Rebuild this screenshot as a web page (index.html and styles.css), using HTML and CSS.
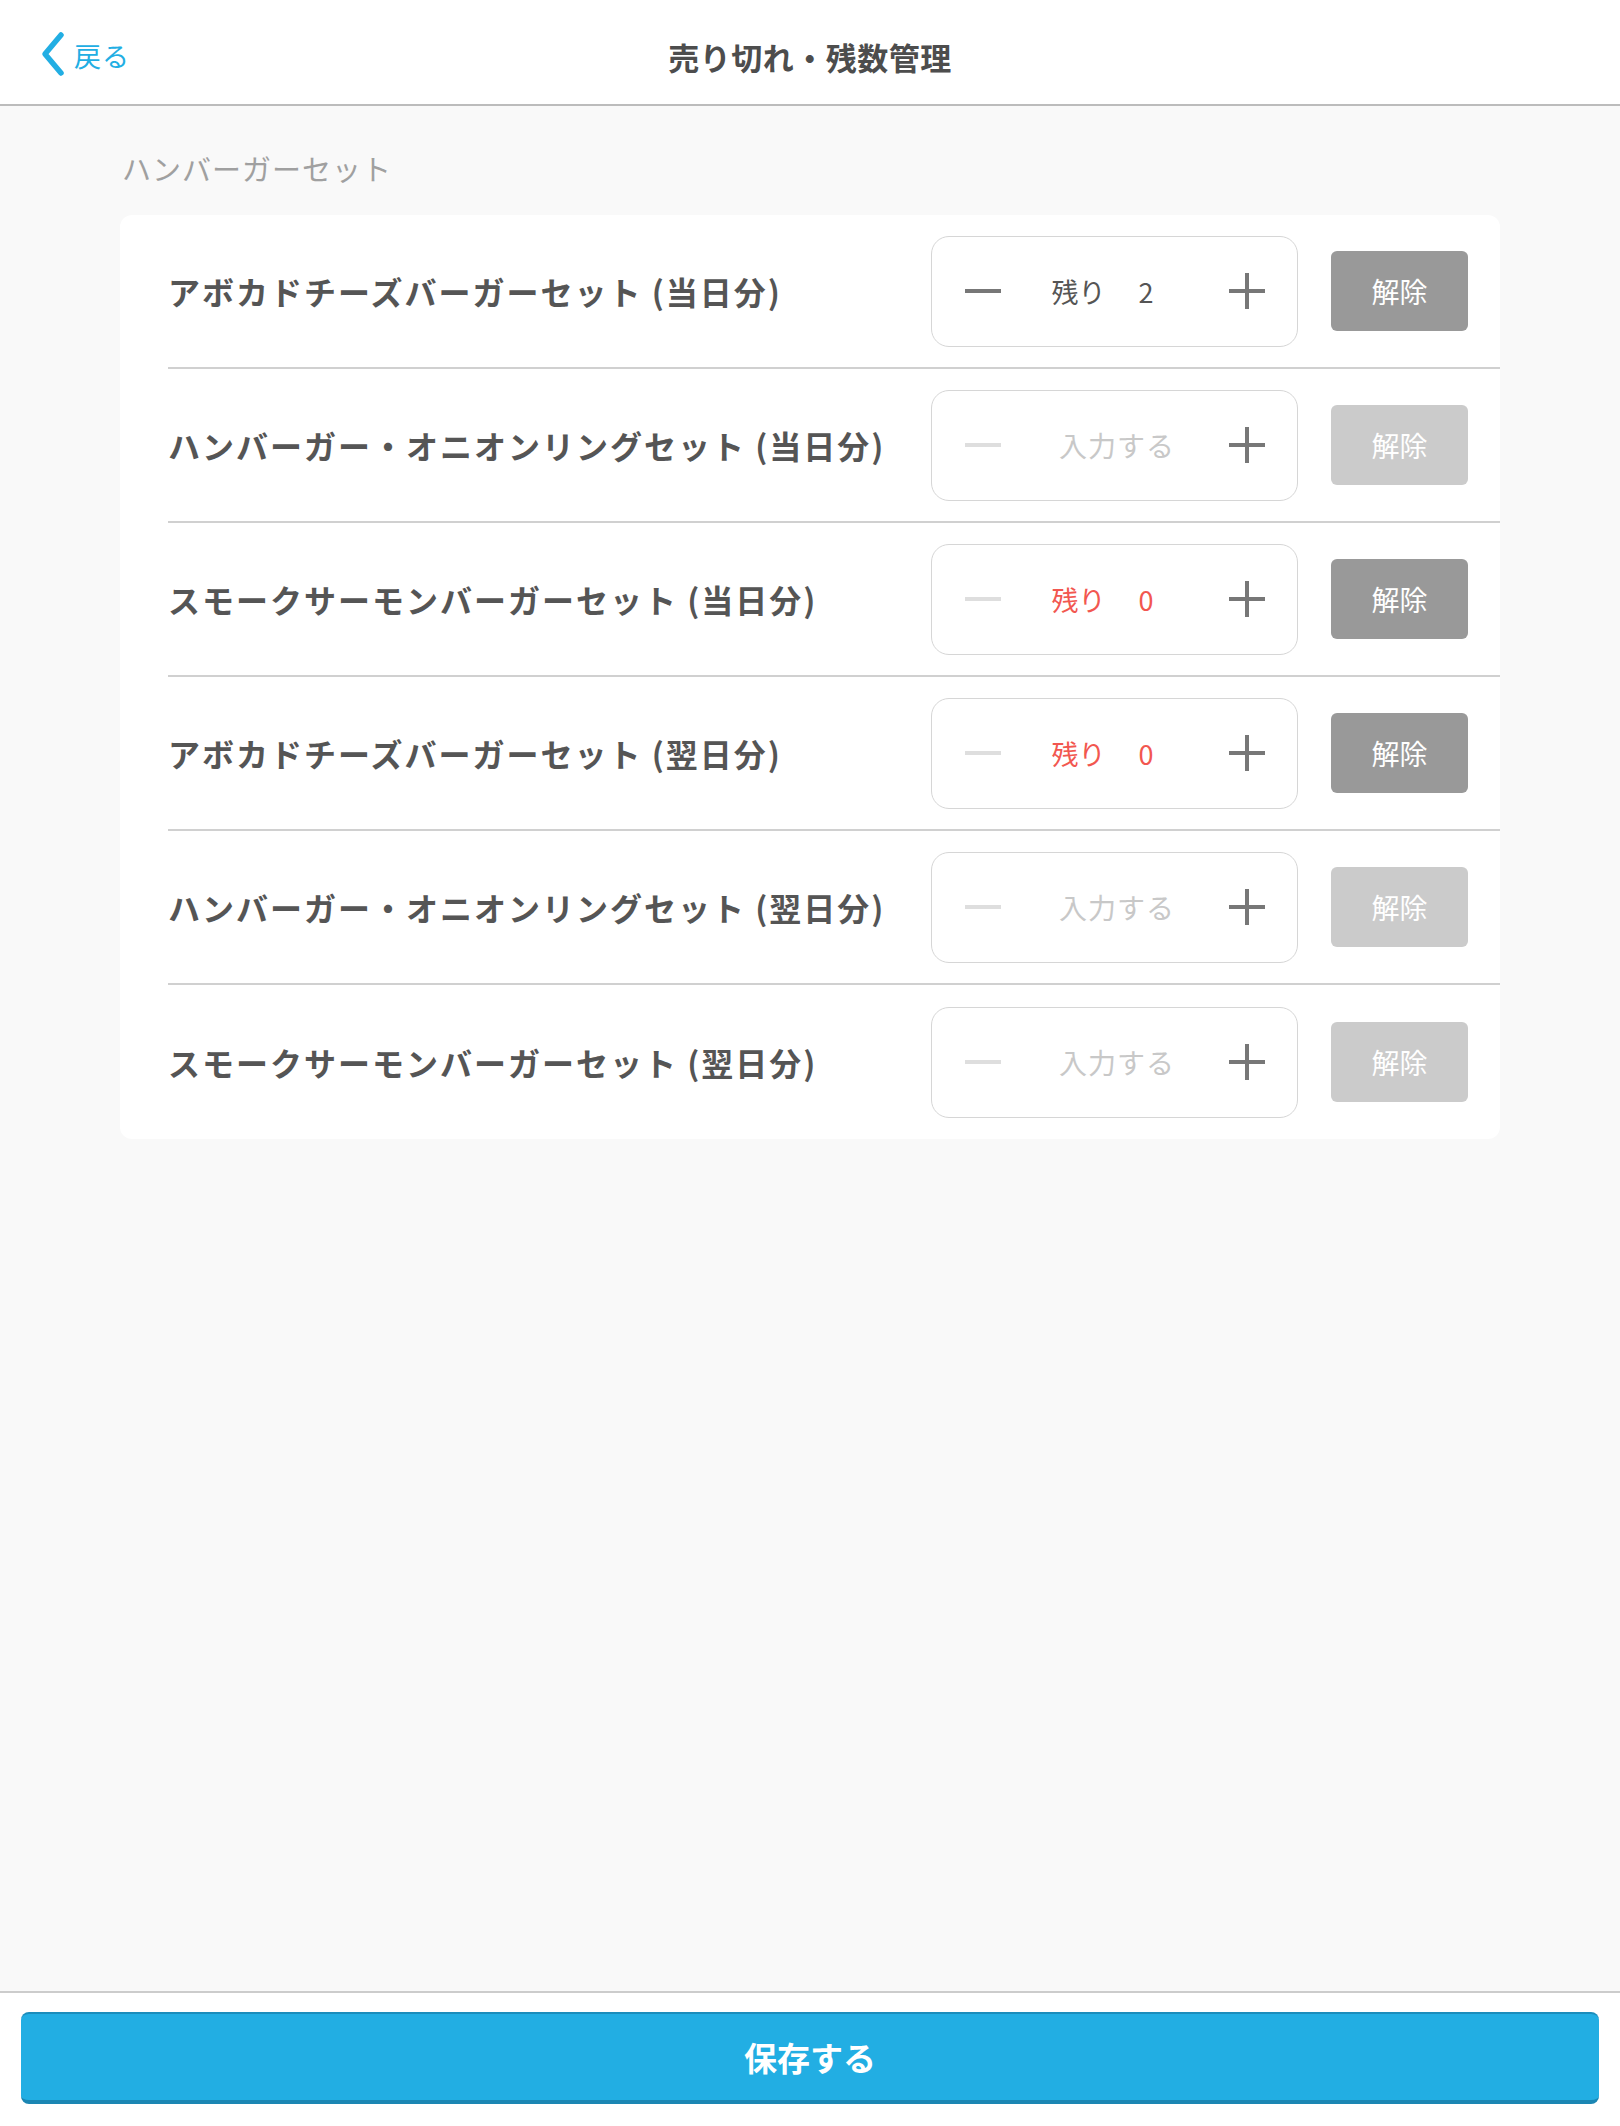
FILE: index.html
```html
<!DOCTYPE html>
<html lang="ja">
<head>
    <meta charset="UTF-8">
    <meta name="viewport" content="width=device-width, initial-scale=1.0">
    <title>売り切れ・残数管理</title>
    <link rel="stylesheet" href="styles.css">
</head>
<body>
    <header class="header">
        <a class="back" href="#">
            <svg class="back-icon" width="26" height="46" viewBox="0 0 26 46">
                <path d="M21 4 L5 23 L21 42" fill="none" stroke="#22aee3" stroke-width="5.5" stroke-linecap="round" stroke-linejoin="round"/>
            </svg>
            <span>戻る</span>
        </a>
        <h1 class="title">売り切れ・残数管理</h1>
        <div></div>
    </header>

    <main class="main">
        <p class="group-label">ハンバーガーセット</p>
        <div class="card">
            <div class="row">
                <div class="name">アボカドチーズバーガーセット (当日分)</div>
                <div class="stepper">
                    <svg class="minus" width="36" height="36" viewBox="0 0 36 36"><rect x="0" y="16" width="36" height="4"/></svg>
                    <div class="value"><span>残り</span><span class="num">2</span></div>
                    <svg class="plus" width="36" height="36" viewBox="0 0 36 36"><rect x="0" y="16" width="36" height="4"/><rect x="16" y="0" width="4" height="36"/></svg>
                </div>
                <button class="clear">解除</button>
            </div>
            <div class="row">
                <div class="name">ハンバーガー・オニオンリングセット (当日分)</div>
                <div class="stepper">
                    <svg class="minus off" width="36" height="36" viewBox="0 0 36 36"><rect x="0" y="16" width="36" height="4"/></svg>
                    <div class="value empty">入力する</div>
                    <svg class="plus" width="36" height="36" viewBox="0 0 36 36"><rect x="0" y="16" width="36" height="4"/><rect x="16" y="0" width="4" height="36"/></svg>
                </div>
                <button class="clear off">解除</button>
            </div>
            <div class="row">
                <div class="name">スモークサーモンバーガーセット (当日分)</div>
                <div class="stepper">
                    <svg class="minus off" width="36" height="36" viewBox="0 0 36 36"><rect x="0" y="16" width="36" height="4"/></svg>
                    <div class="value sold"><span>残り</span><span class="num">0</span></div>
                    <svg class="plus" width="36" height="36" viewBox="0 0 36 36"><rect x="0" y="16" width="36" height="4"/><rect x="16" y="0" width="4" height="36"/></svg>
                </div>
                <button class="clear">解除</button>
            </div>
            <div class="row">
                <div class="name">アボカドチーズバーガーセット (翌日分)</div>
                <div class="stepper">
                    <svg class="minus off" width="36" height="36" viewBox="0 0 36 36"><rect x="0" y="16" width="36" height="4"/></svg>
                    <div class="value sold"><span>残り</span><span class="num">0</span></div>
                    <svg class="plus" width="36" height="36" viewBox="0 0 36 36"><rect x="0" y="16" width="36" height="4"/><rect x="16" y="0" width="4" height="36"/></svg>
                </div>
                <button class="clear">解除</button>
            </div>
            <div class="row">
                <div class="name">ハンバーガー・オニオンリングセット (翌日分)</div>
                <div class="stepper">
                    <svg class="minus off" width="36" height="36" viewBox="0 0 36 36"><rect x="0" y="16" width="36" height="4"/></svg>
                    <div class="value empty">入力する</div>
                    <svg class="plus" width="36" height="36" viewBox="0 0 36 36"><rect x="0" y="16" width="36" height="4"/><rect x="16" y="0" width="4" height="36"/></svg>
                </div>
                <button class="clear off">解除</button>
            </div>
            <div class="row">
                <div class="name">スモークサーモンバーガーセット (翌日分)</div>
                <div class="stepper">
                    <svg class="minus off" width="36" height="36" viewBox="0 0 36 36"><rect x="0" y="16" width="36" height="4"/></svg>
                    <div class="value empty">入力する</div>
                    <svg class="plus" width="36" height="36" viewBox="0 0 36 36"><rect x="0" y="16" width="36" height="4"/><rect x="16" y="0" width="4" height="36"/></svg>
                </div>
                <button class="clear off">解除</button>
            </div>
        </div>
    </main>

    <footer class="footer">
        <button class="save">保存する</button>
    </footer>
</body>
</html>
```

FILE: styles.css
```css
* {
    box-sizing: border-box;
}
body {
    margin: 0;
    min-height: 100vh;
    display: flex;
    flex-direction: column;
    font-family: "Noto Sans CJK JP", "Noto Sans", sans-serif;
    background-color: #f9f9f9;
    color: #555;
}
.header {
    height: 106px;
    display: grid;
    grid-template-columns: 1fr auto 1fr;
    align-items: center;
    padding-top: 4px;
    background: #fff;
    border-bottom: 2px solid #bcbcbc;
}
.back {
    display: flex;
    align-items: center;
    gap: 8px;
    margin-left: 40px;
    color: #22aee3;
    text-decoration: none;
    font-size: 27px;
    line-height: 1;
}
.back-icon {
    display: block;
}
.back span {
    padding-top: 2px;
    letter-spacing: 1px;
}
.title {
    margin: 0;
    font-size: 31px;
    font-weight: 700;
    color: #4d4d4d;
    line-height: 1;
    padding-top: 4px;
    letter-spacing: 0.5px;
}
.main {
    flex: 1;
    padding: 45px 120px 0;
}
.group-label {
    margin: 0 0 30px 2px;
    font-size: 29px;
    line-height: 34px;
    letter-spacing: 1px;
    color: #a0a0a0;
    font-weight: 400;
}
.card {
    background: #fff;
    border-radius: 12px;
}
.row {
    height: 154px;
    margin-left: 48px;
    padding-right: 32px;
    display: flex;
    align-items: center;
    border-bottom: 2px solid #d0d0d0;
}
.row:last-child {
    border-bottom: none;
}
.name {
    flex: 1;
    font-size: 32px;
    font-weight: 700;
    letter-spacing: 2px;
    color: #555;
    line-height: 1;
}
.stepper {
    width: 367px;
    height: 111px;
    border: 1.5px solid #d6d6d6;
    border-radius: 18px;
    display: flex;
    align-items: center;
    padding: 0 32px 0 33px;
}
.minus {
    fill: #777;
}
.minus.off {
    fill: #dedede;
}
.plus {
    fill: #777;
}
.value {
    flex: 1;
    display: flex;
    justify-content: center;
    gap: 33px;
    font-size: 27px;
    line-height: 1;
    color: #555;
}
.value .num {
    width: 40px;
}
.value.sold {
    color: #f25750;
}
.value.empty {
    color: #c8c8c8;
    font-size: 28px;
    letter-spacing: 1px;
    padding-left: 4px;
}
.clear {
    width: 137px;
    height: 80px;
    margin-left: 33px;
    border: none;
    border-radius: 6px;
    background: #999;
    color: #fff;
    font-family: inherit;
    font-size: 28px;
    cursor: pointer;
}
.clear.off {
    background: #cbcbcb;
}
.footer {
    background: #fff;
    border-top: 2px solid #cccccc;
    padding: 19px 21px 22px;
}
.save {
    display: block;
    width: 100%;
    height: 92px;
    border: none;
    border-top: 2px solid #1b8dbc;
    border-bottom: 4px solid #1b86b3;
    border-radius: 8px;
    background: #22aee3;
    color: #fff;
    font-family: inherit;
    font-size: 33px;
    font-weight: 700;
    cursor: pointer;
}
```
